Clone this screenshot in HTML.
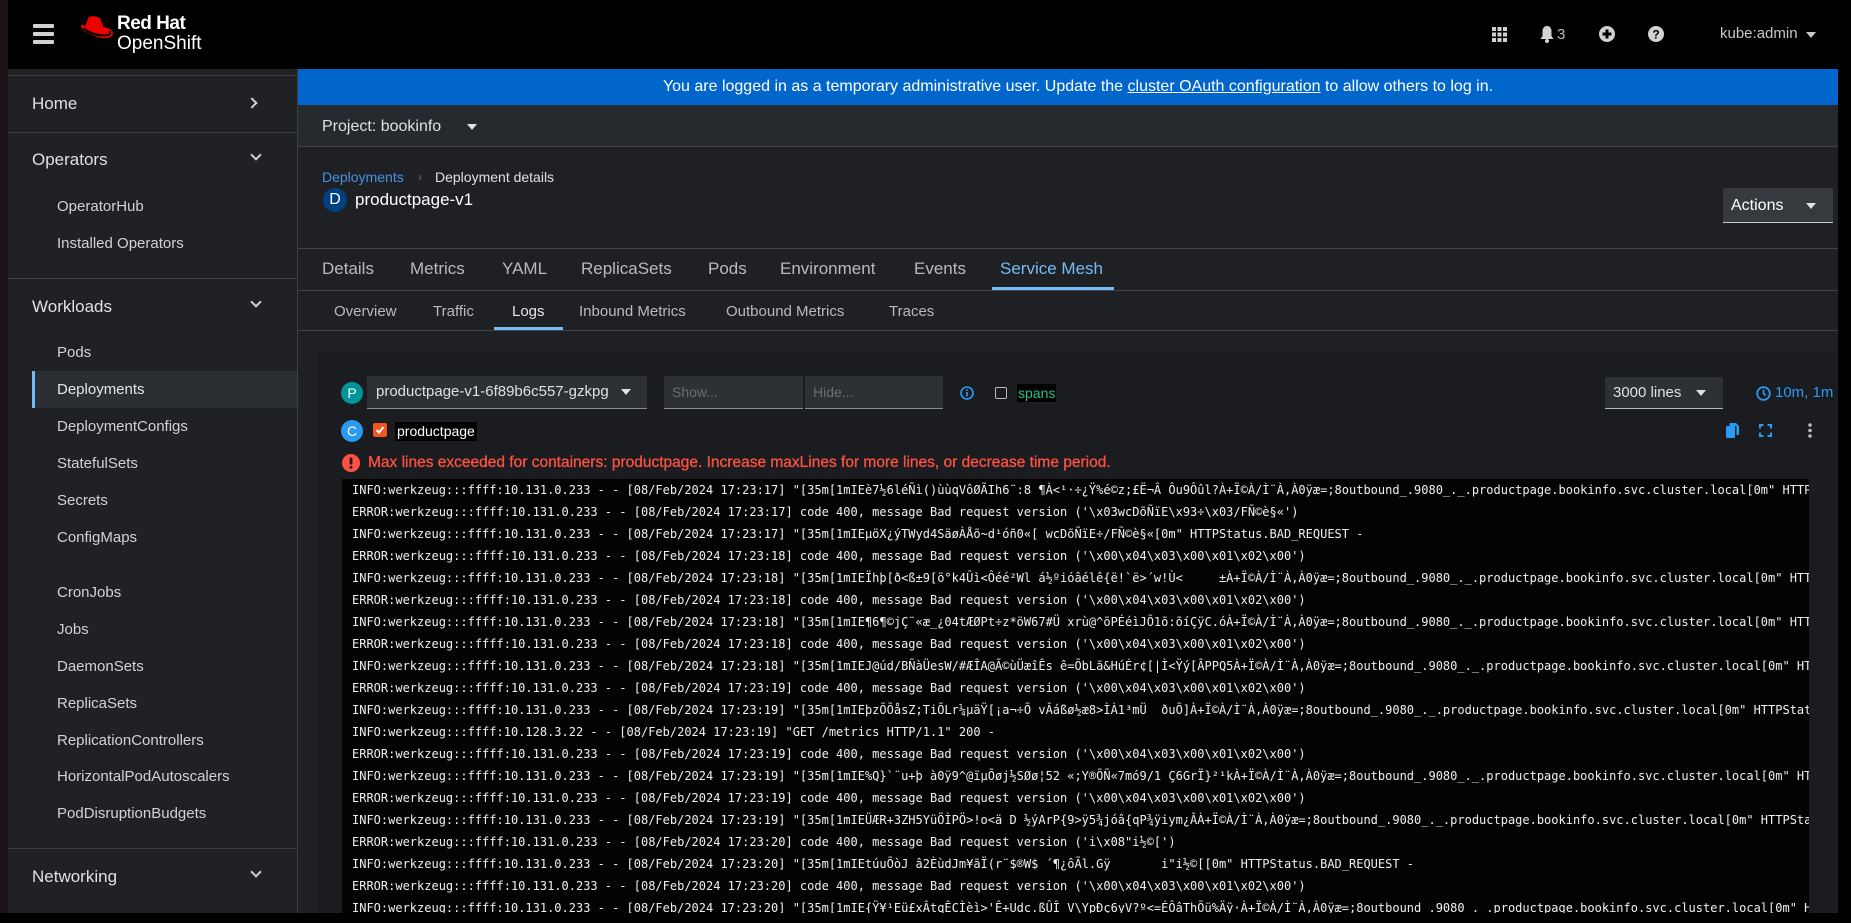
<!DOCTYPE html>
<html><head><meta charset="utf-8"><style>
*{margin:0;padding:0;box-sizing:border-box}
body{width:1851px;height:923px;overflow:hidden;background:#000;font-family:"Liberation Sans",sans-serif;color:#e0e0e0;position:relative}
.a{position:absolute}
.t{position:absolute;white-space:nowrap;line-height:20px}
.sb{font-size:15px;color:#d2d2d2}
.top{font-size:17px;color:#e0e0e0}
.hr{position:absolute;height:1px;background:#3c3f42}
.chev{position:absolute;width:8px;height:8px;border-right:2.5px solid #d2d2d2;border-bottom:2.5px solid #d2d2d2}
.caret{position:absolute;width:0;height:0;border-left:5px solid transparent;border-right:5px solid transparent;border-top:6px solid #e0e0e0}
.log{position:absolute;left:342px;top:479px;width:1467px;height:434px;background:#030303;overflow:hidden}
.log div{font-family:"DejaVu Sans Mono","Liberation Mono",monospace;font-size:12px;color:#f0f0f0;white-space:pre;height:22px;line-height:22px;padding-left:10px;letter-spacing:0}
</style></head><body>
<!-- left strip -->
<div class="a" style="left:0;top:0;width:8px;height:913px;background:#1a1216"></div>
<!-- header -->
<div class="a" style="left:8px;top:0;width:1830px;height:69px;background:#000"></div>
<div class="a" style="left:33px;top:24px;width:21px;height:3.5px;background:#d2d2d2;border-radius:1px"></div>
<div class="a" style="left:33px;top:32px;width:21px;height:3.5px;background:#d2d2d2;border-radius:1px"></div>
<div class="a" style="left:33px;top:40px;width:21px;height:3.5px;background:#d2d2d2;border-radius:1px"></div>
<svg class="a" style="left:79px;top:14px" width="36" height="30" viewBox="0 0 34 26">
<path d="M9 2 C12 0 18 1 20 3 L23 11 C28 12 33 14 32 18 C31 22 23 23 16 20 C9 17 3 15 2 11 C1 9 4 9 6 10 Z" fill="#ee0000"/>
<path d="M4 12 C8 16 18 20 26 19 C29 19 30 17 29 15" fill="none" stroke="#000" stroke-width="2"/>
</svg>
<div class="t" style="left:117px;top:14px;font-size:19px;font-weight:bold;color:#fff;letter-spacing:-0.5px">Red Hat</div>
<div class="t" style="left:117px;top:34px;font-size:19px;color:#fff">OpenShift</div>
<!-- header right icons -->
<svg class="a" style="left:1492px;top:27px" width="15" height="15" viewBox="0 0 15 15" fill="#d2d2d2">
<rect x="0" y="0" width="4" height="4"/><rect x="5.5" y="0" width="4" height="4"/><rect x="11" y="0" width="4" height="4"/>
<rect x="0" y="5.5" width="4" height="4"/><rect x="5.5" y="5.5" width="4" height="4"/><rect x="11" y="5.5" width="4" height="4"/>
<rect x="0" y="11" width="4" height="4"/><rect x="5.5" y="11" width="4" height="4"/><rect x="11" y="11" width="4" height="4"/></svg>
<svg class="a" style="left:1540px;top:26px" width="14" height="17" viewBox="0 0 14 17" fill="#d2d2d2"><path d="M7 0 C4 0 2.5 2.5 2.5 5 L2.5 10 L0.5 13 L13.5 13 L11.5 10 L11.5 5 C11.5 2.5 10 0 7 0Z"/><circle cx="7" cy="15" r="2"/></svg>
<div class="t" style="left:1557px;top:25px;font-size:15px;color:#b8bbbe">3</div>
<svg class="a" style="left:1599px;top:26px" width="16" height="16" viewBox="0 0 16 16"><circle cx="8" cy="8" r="8" fill="#d2d2d2"/><rect x="6.5" y="3.5" width="3" height="9" fill="#000"/><rect x="3.5" y="6.5" width="9" height="3" fill="#000"/></svg>
<svg class="a" style="left:1648px;top:26px" width="16" height="16" viewBox="0 0 16 16"><circle cx="8" cy="8" r="8" fill="#d2d2d2"/><text x="8" y="12.5" font-size="12" font-weight="bold" text-anchor="middle" fill="#000" font-family="Liberation Sans">?</text></svg>
<div class="t" style="left:1720px;top:24px;font-size:15px;color:#c7c7c7">kube:admin</div>
<div class="caret" style="left:1806px;top:32px;border-top-color:#c7c7c7"></div>

<!-- sidebar -->
<div class="a" style="left:8px;top:69px;width:289px;height:844px;background:#1f2125"></div>
<div class="a" style="left:297px;top:69px;width:1px;height:844px;background:#3c3f42"></div>
<div class="hr" style="left:8px;top:75px;width:289px"></div>
<div class="t top" style="left:32px;top:94px">Home</div>
<div class="chev" style="left:248px;top:99px;transform:rotate(-45deg)"></div>
<div class="hr" style="left:8px;top:132px;width:289px"></div>
<div class="t top" style="left:32px;top:150px">Operators</div>
<div class="chev" style="left:252px;top:151px;transform:rotate(45deg)"></div>
<div class="t sb" style="left:57px;top:197px">OperatorHub</div>
<div class="t sb" style="left:57px;top:234px">Installed Operators</div>
<div class="hr" style="left:8px;top:278px;width:289px"></div>
<div class="t top" style="left:32px;top:297px">Workloads</div>
<div class="chev" style="left:252px;top:298px;transform:rotate(45deg)"></div>
<div class="t sb" style="left:57px;top:343px">Pods</div>
<div class="a" style="left:32px;top:371px;width:265px;height:37px;background:#2b2e33"></div>
<div class="a" style="left:32px;top:371px;width:3px;height:37px;background:#73bcf7"></div>
<div class="t sb" style="left:57px;top:380px;color:#e6e6e6">Deployments</div>
<div class="t sb" style="left:57px;top:417px">DeploymentConfigs</div>
<div class="t sb" style="left:57px;top:454px">StatefulSets</div>
<div class="t sb" style="left:57px;top:491px">Secrets</div>
<div class="t sb" style="left:57px;top:528px">ConfigMaps</div>
<div class="t sb" style="left:57px;top:583px">CronJobs</div>
<div class="t sb" style="left:57px;top:620px">Jobs</div>
<div class="t sb" style="left:57px;top:657px">DaemonSets</div>
<div class="t sb" style="left:57px;top:694px">ReplicaSets</div>
<div class="t sb" style="left:57px;top:731px">ReplicationControllers</div>
<div class="t sb" style="left:57px;top:767px">HorizontalPodAutoscalers</div>
<div class="t sb" style="left:57px;top:804px">PodDisruptionBudgets</div>
<div class="hr" style="left:8px;top:848px;width:289px"></div>
<div class="t top" style="left:32px;top:867px">Networking</div>
<div class="chev" style="left:252px;top:868px;transform:rotate(45deg)"></div>

<!-- main -->
<div class="a" style="left:298px;top:69px;width:1540px;height:844px;background:#1e2024"></div>
<div class="a" style="left:298px;top:69px;width:1540px;height:36px;background:#0066cc"></div>
<div class="t" style="left:298px;width:1560px;text-align:center;top:77px;font-size:16px;color:#fff">You are logged in as a temporary administrative user. Update the <span style="text-decoration:underline">cluster OAuth configuration</span> to allow others to log in.</div>
<div class="a" style="left:298px;top:105px;width:1540px;height:42px;background:#26292d;border-bottom:1px solid #444548"></div>
<div class="t" style="left:322px;top:117px;font-size:16px;color:#e0e0e0">Project: bookinfo</div>
<div class="caret" style="left:467px;top:124px"></div>

<div class="t" style="left:322px;top:167px;font-size:14px;color:#4394e5">Deployments</div>
<div class="t" style="left:418px;top:167px;font-size:12px;color:#6a6e73">›</div>
<div class="t" style="left:435px;top:167px;font-size:14px;color:#e0e0e0">Deployment details</div>
<div class="a" style="left:323px;top:188px;width:24px;height:24px;border-radius:12px;background:#004080;color:#fff;font-size:16px;line-height:24px;text-align:center">D</div>
<div class="t" style="left:355px;top:190px;font-size:17px;color:#fff">productpage-v1</div>
<div class="a" style="left:1723px;top:188px;width:110px;height:35px;background:#36393d;border-bottom:1px solid #c7c7c7"></div>
<div class="t" style="left:1731px;top:196px;font-size:16px;color:#fff">Actions</div>
<div class="caret" style="left:1806px;top:203px"></div>

<div class="hr" style="left:298px;top:248px;width:1540px;background:#444548"></div>
<div class="t" style="left:322px;top:259px;font-size:17px;color:#b8bbbe">Details</div>
<div class="t" style="left:410px;top:259px;font-size:17px;color:#b8bbbe">Metrics</div>
<div class="t" style="left:502px;top:259px;font-size:17px;color:#b8bbbe">YAML</div>
<div class="t" style="left:581px;top:259px;font-size:17px;color:#b8bbbe">ReplicaSets</div>
<div class="t" style="left:708px;top:259px;font-size:17px;color:#b8bbbe">Pods</div>
<div class="t" style="left:780px;top:259px;font-size:17px;color:#b8bbbe">Environment</div>
<div class="t" style="left:914px;top:259px;font-size:17px;color:#b8bbbe">Events</div>
<div class="t" style="left:1000px;top:259px;font-size:17px;color:#73bcf7">Service Mesh</div>
<div class="hr" style="left:298px;top:290px;width:1540px;background:#444548"></div>
<div class="a" style="left:992px;top:287px;width:122px;height:3px;background:#73bcf7"></div>

<div class="t" style="left:334px;top:302px;font-size:15px;color:#b8bbbe">Overview</div>
<div class="t" style="left:433px;top:302px;font-size:15px;color:#b8bbbe">Traffic</div>
<div class="t" style="left:512px;top:302px;font-size:15px;color:#e6e6e6">Logs</div>
<div class="t" style="left:579px;top:302px;font-size:15px;color:#b8bbbe">Inbound Metrics</div>
<div class="t" style="left:726px;top:302px;font-size:15px;color:#b8bbbe">Outbound Metrics</div>
<div class="t" style="left:889px;top:302px;font-size:15px;color:#b8bbbe">Traces</div>
<div class="hr" style="left:298px;top:330px;width:1540px;background:#444548"></div>
<div class="a" style="left:494px;top:327px;width:69px;height:3px;background:#73bcf7"></div>

<!-- card -->
<div class="a" style="left:318px;top:351px;width:1520px;height:562px;background:#1a1c20"></div>
<div class="a" style="left:341px;top:382px;width:22px;height:22px;border-radius:11px;background:#009596;color:#fff;font-size:14px;line-height:22px;text-align:center">P</div>
<div class="a" style="left:367px;top:376px;width:280px;height:33px;background:#2d3035;border-bottom:1px solid #8a8d90"></div>
<div class="t" style="left:376px;top:382px;font-size:15px;color:#e0e0e0">productpage-v1-6f89b6c557-gzkpg</div>
<div class="caret" style="left:621px;top:389px"></div>
<div class="a" style="left:664px;top:376px;width:139px;height:33px;background:#2d3035;border-bottom:1px solid #8a8d90"></div>
<div class="a" style="left:805px;top:376px;width:138px;height:33px;background:#2d3035;border-bottom:1px solid #8a8d90"></div>
<div class="t" style="left:672px;top:382px;font-size:14px;color:#6a6e73">Show...</div>
<div class="t" style="left:813px;top:382px;font-size:14px;color:#6a6e73">Hide...</div>
<svg class="a" style="left:960px;top:386px" width="14" height="14" viewBox="0 0 14 14"><circle cx="7" cy="7" r="6" fill="none" stroke="#2b9af3" stroke-width="1.6"/><rect x="6.2" y="6" width="1.6" height="4.5" fill="#2b9af3"/><rect x="6.2" y="3.4" width="1.6" height="1.6" fill="#2b9af3"/></svg>
<div class="a" style="left:995px;top:387px;width:12px;height:12px;border:1.5px solid #b8bbbe;border-radius:2px"></div>
<div class="a" style="left:1017px;top:384px;height:18px;background:#000;color:#2bc08a;font-size:14px;line-height:18px;padding:0 1px">spans</div>
<div class="a" style="left:1605px;top:377px;width:118px;height:32px;background:#2d3035;border-bottom:1px solid #b8bbbe"></div>
<div class="t" style="left:1613px;top:383px;font-size:15px;color:#e0e0e0">3000 lines</div>
<div class="caret" style="left:1696px;top:390px"></div>
<svg class="a" style="left:1756px;top:386px" width="15" height="15" viewBox="0 0 15 15"><circle cx="7.5" cy="7.5" r="6.3" fill="none" stroke="#2b9af3" stroke-width="1.8"/><path d="M7.5 3.5 L7.5 7.8 L10 9.5" fill="none" stroke="#2b9af3" stroke-width="1.6"/></svg>
<div class="t" style="left:1775px;top:383px;font-size:15px;color:#2b9af3">10m, 1m</div>

<div class="a" style="left:341px;top:420px;width:22px;height:22px;border-radius:11px;background:#2b9af3;color:#fff;font-size:14px;line-height:22px;text-align:center">C</div>
<div class="a" style="left:373px;top:423px;width:14px;height:14px;background:#f0561d;border-radius:2px"></div>
<svg class="a" style="left:375px;top:425px" width="10" height="10" viewBox="0 0 10 10"><path d="M1.5 5 L4 7.5 L8.5 2" fill="none" stroke="#fff" stroke-width="2"/></svg>
<div class="a" style="left:395px;top:422px;height:19px;background:#000;color:#fff;font-size:14px;line-height:19px;padding:0 2px">productpage</div>
<svg class="a" style="left:1726px;top:423px" width="13" height="15" viewBox="0 0 13 15" fill="#2b9af3"><rect x="0" y="3" width="9" height="12" rx="1"/><path d="M3.5 0 L10 0 L13 3 L13 12 L10.5 12 L10.5 3 L3.5 3Z"/></svg>
<svg class="a" style="left:1759px;top:424px" width="13" height="13" viewBox="0 0 13 13" fill="none" stroke="#2b9af3" stroke-width="2"><path d="M1 4.5 V1 H4.5 M8.5 1 H12 V4.5 M12 8.5 V12 H8.5 M4.5 12 H1 V8.5"/></svg>
<svg class="a" style="left:1808px;top:423px" width="4" height="15" viewBox="0 0 4 15" fill="#b8bbbe"><circle cx="2" cy="2" r="1.8"/><circle cx="2" cy="7.5" r="1.8"/><circle cx="2" cy="13" r="1.8"/></svg>

<svg class="a" style="left:342px;top:454px" width="18" height="18" viewBox="0 0 18 18"><circle cx="9" cy="9" r="9" fill="#fe5142"/><rect x="7.6" y="3.5" width="2.8" height="7" rx="1" fill="#1a1c20"/><circle cx="9" cy="13.3" r="1.5" fill="#1a1c20"/></svg>
<div class="t" style="left:368px;top:453px;font-size:15.5px;color:#fe5142;-webkit-text-stroke:0.3px #fe5142">Max lines exceeded for containers: productpage. Increase maxLines for more lines, or decrease time period.</div>

<div class="log">
<div>INFO:werkzeug:::ffff:10.131.0.233 - - [08/Feb/2024 17:23:17] "[35m[1mIEè7½6léÑì()ùùqVôØÃIh6¨:8 ¶À&lt;¹·÷¿Ÿ%é©z;£Ë¬Â Ôu9Ôûl?À+Ï©À/Ì¨À,À0ÿæ=;8outbound_.9080_._.productpage.bookinfo.svc.cluster.local[0m" HTTPStatus.BAD_REQUEST -</div>
<div>ERROR:werkzeug:::ffff:10.131.0.233 - - [08/Feb/2024 17:23:17] code 400, message Bad request version ('\x03wcDõÑïE\x93÷\x03/FÑ©è§«')</div>
<div>INFO:werkzeug:::ffff:10.131.0.233 - - [08/Feb/2024 17:23:17] "[35m[1mIEµöX¿ýTWyd4SäøÀÅõ~d¹óñ0«[ wcDõÑïE÷/FÑ©è§«[0m" HTTPStatus.BAD_REQUEST -</div>
<div>ERROR:werkzeug:::ffff:10.131.0.233 - - [08/Feb/2024 17:23:18] code 400, message Bad request version ('\x00\x04\x03\x00\x01\x02\x00')</div>
<div>INFO:werkzeug:::ffff:10.131.0.233 - - [08/Feb/2024 17:23:18] "[35m[1mIEÏhþ[ð&lt;ß±9[ö°k4Ûì&lt;Ôéé²Wl á½ºióâélê{ë!`ë&gt;´w!Ù&lt;     ±À+Ï©À/Ì¨À,À0ÿæ=;8outbound_.9080_._.productpage.bookinfo.svc.cluster.local[0m" HTTPStatus.BAD_REQUEST -</div>
<div>ERROR:werkzeug:::ffff:10.131.0.233 - - [08/Feb/2024 17:23:18] code 400, message Bad request version ('\x00\x04\x03\x00\x01\x02\x00')</div>
<div>INFO:werkzeug:::ffff:10.131.0.233 - - [08/Feb/2024 17:23:18] "[35m[1mIE¶6¶©jÇ¨«æ_¿04tÆØPt÷z*öW67#Ü xrù@^õPÉéìJÕ1õ:õíÇÿC.óÀ+Ï©À/Ì¨À,À0ÿæ=;8outbound_.9080_._.productpage.bookinfo.svc.cluster.local[0m" HTTPStatus.BAD_REQUEST -</div>
<div>ERROR:werkzeug:::ffff:10.131.0.233 - - [08/Feb/2024 17:23:18] code 400, message Bad request version ('\x00\x04\x03\x00\x01\x02\x00')</div>
<div>INFO:werkzeug:::ffff:10.131.0.233 - - [08/Feb/2024 17:23:18] "[35m[1mIEJ@úd/BÑàÜesW/#ÆÎA@Ã©ùÜæîÊs ê=ÕbLã&amp;HúÉr¢[|Ì&lt;Ÿý[ÂPPQ5À+Ï©À/Ì¨À,À0ÿæ=;8outbound_.9080_._.productpage.bookinfo.svc.cluster.local[0m" HTTPStatus.BAD_REQUEST -</div>
<div>ERROR:werkzeug:::ffff:10.131.0.233 - - [08/Feb/2024 17:23:19] code 400, message Bad request version ('\x00\x04\x03\x00\x01\x02\x00')</div>
<div>INFO:werkzeug:::ffff:10.131.0.233 - - [08/Feb/2024 17:23:19] "[35m[1mIEþzÕÕåsZ;TiÕLr¼µäŸ[¡a¬÷Õ vÂáßø½æ8&gt;ÌÀ1³mÜ  ðuÕ]À+Ï©À/Ì¨À,À0ÿæ=;8outbound_.9080_._.productpage.bookinfo.svc.cluster.local[0m" HTTPStatus.BAD_REQUEST -</div>
<div>INFO:werkzeug:::ffff:10.128.3.22 - - [08/Feb/2024 17:23:19] "GET /metrics HTTP/1.1" 200 -</div>
<div>ERROR:werkzeug:::ffff:10.131.0.233 - - [08/Feb/2024 17:23:19] code 400, message Bad request version ('\x00\x04\x03\x00\x01\x02\x00')</div>
<div>INFO:werkzeug:::ffff:10.131.0.233 - - [08/Feb/2024 17:23:19] "[35m[1mIE%Q}`¨u+þ à0ÿ9^@ïµÕøj½SØø¦52 «;Y®ÕÑ«7mó9/1 Ç6GrÏ}²¹kÀ+Ï©À/Ì¨À,À0ÿæ=;8outbound_.9080_._.productpage.bookinfo.svc.cluster.local[0m" HTTPStatus.BAD_REQUEST -</div>
<div>ERROR:werkzeug:::ffff:10.131.0.233 - - [08/Feb/2024 17:23:19] code 400, message Bad request version ('\x00\x04\x03\x00\x01\x02\x00')</div>
<div>INFO:werkzeug:::ffff:10.131.0.233 - - [08/Feb/2024 17:23:19] "[35m[1mIEÜÆR+3ZH5YüÖÌPÖ&gt;!o&lt;ä D ½ýArP{9&gt;ÿ5¾jóâ{qP¾ÿiym¿ÂÀ+Ï©À/Ì¨À,À0ÿæ=;8outbound_.9080_._.productpage.bookinfo.svc.cluster.local[0m" HTTPStatus.BAD_REQUEST -</div>
<div>ERROR:werkzeug:::ffff:10.131.0.233 - - [08/Feb/2024 17:23:20] code 400, message Bad request version ('i\x08"i½©[')</div>
<div>INFO:werkzeug:::ffff:10.131.0.233 - - [08/Feb/2024 17:23:20] "[35m[1mIEtúuÕòJ â2ÈùdJm¥ãÏ(r¨$®W$ ´¶¿ôÃl.Gÿ       i"i½©[[0m" HTTPStatus.BAD_REQUEST -</div>
<div>ERROR:werkzeug:::ffff:10.131.0.233 - - [08/Feb/2024 17:23:20] code 400, message Bad request version ('\x00\x04\x03\x00\x01\x02\x00')</div>
<div>INFO:werkzeug:::ffff:10.131.0.233 - - [08/Feb/2024 17:23:20] "[35m[1mIE{Ÿ¥¹Eü£xÂtqÊCÌèì&gt;'Ê+Udc.ßÛÎ V\YpÐç6yV?º&lt;=ÉÔâThÕü%Äÿ·À+Ï©À/Ì¨À,À0ÿæ=;8outbound_.9080_._.productpage.bookinfo.svc.cluster.local[0m" HTTPStatus.BAD_REQUEST -</div>
</div>
<!-- bottom & right black -->
<div class="a" style="left:0;top:913px;width:1851px;height:10px;background:#000"></div>
<div class="a" style="left:1838px;top:0;width:13px;height:923px;background:#000"></div>
</body></html>
